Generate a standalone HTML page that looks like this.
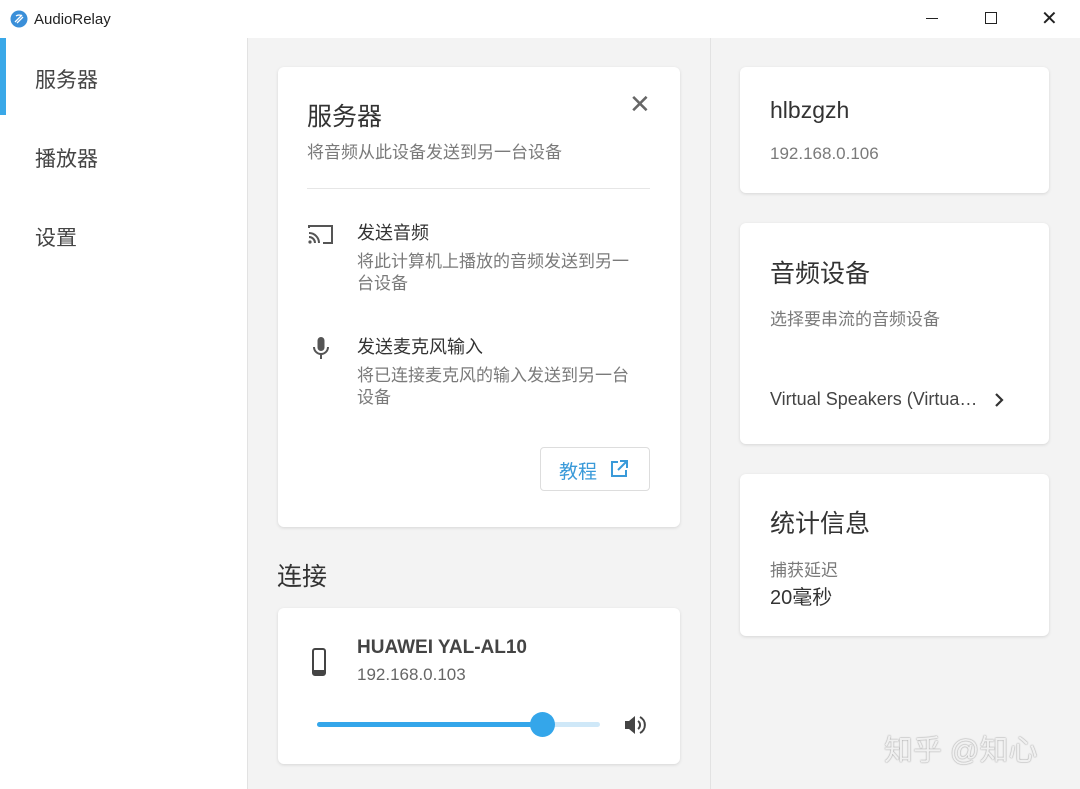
<!DOCTYPE html>
<html><head><meta charset="utf-8"><style>
*{margin:0;padding:0;box-sizing:border-box}
body{width:1080px;height:789px;overflow:hidden;background:#f3f3f3;font-family:"Liberation Sans","Noto Sans CJK SC",sans-serif;position:relative;color:#333}
.a{position:absolute}
.card{position:absolute;background:#fff;border-radius:6px;box-shadow:0 1px 3px rgba(0,0,0,.12)}
.g{color:#7a7a7a}
</style></head><body>
<div class="a" style="left:0;top:0;width:1080px;height:38px;background:#fff"></div>
<svg class="a" style="left:10px;top:10px" width="18" height="18" viewBox="0 0 18 18"><circle cx="9" cy="9" r="8.5" fill="#3a8fd9"/><path d="M5 12 L12 5 M7 13 L13 7 M6 6 Q9 4 12 6" stroke="#fff" stroke-width="1.3" fill="none"/></svg>
<div class="a" style="left:34px;top:11px;font-size:15px;color:#222">AudioRelay</div>
<div class="a" style="left:926px;top:18px;width:12px;height:1px;background:#222"></div>
<div class="a" style="left:985px;top:12px;width:12px;height:12px;border:1.3px solid #222"></div>
<div class="a" style="left:1041px;top:6px;font-size:20px;color:#222;font-weight:300">✕</div>
<div class="a" style="left:0;top:38px;width:248px;height:751px;background:#fff;border-right:1px solid #e2e2e2"></div>
<div class="a" style="left:0;top:38px;width:6px;height:77px;background:#3aa8e8"></div>
<div class="a" style="left:35px;top:64px;font-size:21px;color:#444">服务器</div>
<div class="a" style="left:35px;top:143px;font-size:21px;color:#444">播放器</div>
<div class="a" style="left:35px;top:222px;font-size:21px;color:#444">设置</div>
<div class="a" style="left:710px;top:38px;width:1px;height:751px;background:#e2e2e2"></div>

<div class="card" style="left:278px;top:67px;width:402px;height:460px">
<div class="a" style="left:29px;top:30px;font-size:25px;color:#333">服务器</div>
<div class="a" style="left:351px;top:22px;font-size:26px;color:#666;font-weight:300">✕</div>
<div class="a g" style="left:29px;top:71px;font-size:17px">将音频从此设备发送到另一台设备</div>
<div class="a" style="left:29px;top:121px;width:343px;height:1px;background:#e6e6e6"></div>
<svg class="a" style="left:29px;top:156px" width="28" height="22" viewBox="0 0 28 22"><path d="M2 5 V3 H25 V20 H16" stroke="#555" stroke-width="2" fill="none"/><path d="M2 10 A10 10 0 0 1 12 20 M2 14 A6 6 0 0 1 8 20" stroke="#555" stroke-width="2" fill="none"/><circle cx="3" cy="19" r="1.6" fill="#555"/></svg>
<div class="a" style="left:79px;top:152px;font-size:18px;color:#333">发送音频</div>
<div class="a g" style="left:79px;top:184px;font-size:17px;line-height:22px;width:285px">将此计算机上播放的音频发送到另一台设备</div>
<svg class="a" style="left:34px;top:269px" width="18" height="26" viewBox="0 0 18 26"><rect x="5.5" y="1" width="7" height="14" rx="3.5" fill="#555"/><path d="M2 11 A7 7 0 0 0 16 11" stroke="#555" stroke-width="2" fill="none"/><path d="M9 18 V23" stroke="#555" stroke-width="2"/></svg>
<div class="a" style="left:79px;top:266px;font-size:18px;color:#333">发送麦克风输入</div>
<div class="a g" style="left:79px;top:298px;font-size:17px;line-height:22px;width:285px">将已连接麦克风的输入发送到另一台设备</div>
<div class="a" style="left:262px;top:380px;width:110px;height:44px;border:1px solid #ddd;border-radius:4px"></div>
<div class="a" style="left:281px;top:390px;font-size:19px;color:#3a9ad9">教程</div>
<svg class="a" style="left:331px;top:392px" width="20" height="20" viewBox="0 0 20 20"><path d="M9 3 H3 V17 H17 V11 M11 2 H18 V9 M18 2 L9 11" stroke="#3a9ad9" stroke-width="2" fill="none"/></svg>
</div>

<div class="a" style="left:277px;top:557px;font-size:25px;color:#333">连接</div>
<div class="card" style="left:278px;top:608px;width:402px;height:156px">
<svg class="a" style="left:34px;top:40px" width="14" height="28" viewBox="0 0 14 28"><rect x="1" y="1" width="12" height="26" rx="2" fill="none" stroke="#444" stroke-width="2"/><rect x="1" y="22" width="12" height="5" fill="#444"/></svg>
<div class="a" style="left:79px;top:29px;font-size:19px;font-weight:bold;color:#444">HUAWEI YAL-AL10</div>
<div class="a g" style="left:79px;top:57px;font-size:17px;color:#666">192.168.0.103</div>
<div class="a" style="left:39px;top:114px;width:283px;height:5px;background:#cfe8f8;border-radius:3px"></div>
<div class="a" style="left:39px;top:114px;width:226px;height:5px;background:#34a6ea;border-radius:3px"></div>
<div class="a" style="left:252px;top:104px;width:25px;height:25px;background:#34a6ea;border-radius:50%"></div>
<svg class="a" style="left:345px;top:106px" width="24" height="22" viewBox="0 0 24 22"><path d="M2 7 H6 L12 2 V20 L6 15 H2 Z" fill="#444"/><path d="M15 7 A5 5 0 0 1 15 15 M17 3 A9 9 0 0 1 17 19" stroke="#444" stroke-width="2" fill="none"/></svg>
</div>

<div class="card" style="left:740px;top:67px;width:309px;height:126px">
<div class="a" style="left:30px;top:30px;font-size:23px;color:#333">hlbzgzh</div>
<div class="a g" style="left:30px;top:77px;font-size:17px">192.168.0.106</div>
</div>
<div class="card" style="left:740px;top:223px;width:309px;height:221px">
<div class="a" style="left:30px;top:31px;font-size:25px;color:#333">音频设备</div>
<div class="a g" style="left:30px;top:82px;font-size:17px">选择要串流的音频设备</div>
<div class="a" style="left:30px;top:166px;font-size:18px;color:#444">Virtual Speakers (Virtua…</div>
<svg class="a" style="left:253px;top:169px" width="12" height="16" viewBox="0 0 12 16"><path d="M3 2 L9 8 L3 14" stroke="#333" stroke-width="2.2" fill="none"/></svg>
</div>
<div class="card" style="left:740px;top:474px;width:309px;height:162px">
<div class="a" style="left:30px;top:30px;font-size:25px;color:#333">统计信息</div>
<div class="a g" style="left:30px;top:82px;font-size:17px">捕获延迟</div>
<div class="a" style="left:30px;top:107px;font-size:20px;color:#333">20毫秒</div>
</div>
<div class="a" style="left:884px;top:727px;font-size:29px;color:#f0f0f0;text-shadow:0 0 1.5px #777">知乎 @知心</div>
</body></html>
